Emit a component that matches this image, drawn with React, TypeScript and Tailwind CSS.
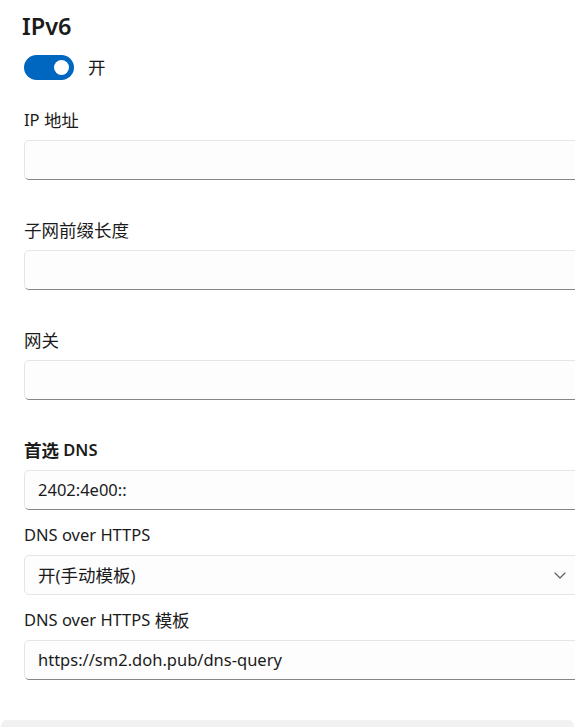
import React from 'react';

const font = { fontFamily: '"Noto Sans", "Noto Sans CJK SC", sans-serif' };

// CJK runs are set a little larger so they match the reference's width
const Cjk = ({ children }: { children: React.ReactNode }) => <span className="text-[17.5px]">{children}</span>;

const TextBox = ({ value }: { value?: string }) => (
    <div className="h-10 w-[560px] rounded-[5px] border border-[#e5e5e5] border-b-[#868686] bg-[#fdfdfd] flex items-center px-[13px] text-[16.5px] text-[#1b1b1b]">
        {value}
    </div>
);

const Label = ({ children, bold }: { children: React.ReactNode; bold?: boolean }) => (
    <div className={`h-5 flex items-center whitespace-pre text-[16.5px] text-[#1b1b1b] ${bold ? 'font-semibold' : ''}`}>
        {children}
    </div>
);

const App = () => {
    return (
        <div className="w-[575px] h-[727px] bg-white overflow-hidden flex flex-col" style={font}>
            <div className="px-6 flex flex-col">
                {/* Title */}
                <div className="mt-[9px] h-9 flex items-center -ml-[2px] text-[23.5px] font-semibold text-[#1b1b1b]">IPv6</div>

                {/* Toggle */}
                <div className="mt-[10px] flex items-center h-[25px]">
                    <div className="relative w-[50px] h-[25px] rounded-full bg-[#0067c0]">
                        <div className="absolute right-[5px] top-[5px] w-[15px] h-[15px] rounded-full bg-white" />
                    </div>
                    <span className="ml-[14px] text-[17.5px] text-[#1b1b1b]">开</span>
                </div>

                <div className="mt-[30px]"><Label>IP <Cjk>地址</Cjk></Label></div>
                <div className="mt-[10px]"><TextBox /></div>

                <div className="mt-10"><Label><Cjk>子网前缀长度</Cjk></Label></div>
                <div className="mt-[10px]"><TextBox /></div>

                <div className="mt-10"><Label><Cjk>网关</Cjk></Label></div>
                <div className="mt-[10px]"><TextBox /></div>

                <div className="mt-10"><Label bold><Cjk>首选</Cjk> DNS</Label></div>
                <div className="mt-[10px]"><TextBox value="2402:4e00::" /></div>

                <div className="mt-[15px]"><Label>DNS over HTTPS</Label></div>
                <div className="mt-[10px]">
                    <div className="h-[40px] w-[560px] rounded-[5px] border border-[#e5e5e5] bg-[#fdfdfd] flex items-center px-[13px] text-[16.5px] text-[#1b1b1b]">
                        <span className="flex-1"><Cjk>开</Cjk>(<Cjk>手动模板</Cjk>)</span>
                        <svg width="12" height="7" viewBox="0 0 12 7" className="mr-[4px]" fill="none">
                            <path d="M1 1l5 5 5-5" stroke="#5f5f5f" strokeWidth="1.2" strokeLinecap="round" strokeLinejoin="round" />
                        </svg>
                    </div>
                </div>

                <div className="mt-[15px]"><Label>DNS over HTTPS <Cjk>模板</Cjk></Label></div>
                <div className="mt-[10px]"><TextBox value="https://sm2.doh.pub/dns-query" /></div>
            </div>

            {/* next card peeking in */}
            <div className="mt-10 mx-[1px] h-[40px] rounded-t-[6px] bg-[#f1f1f1]" />
        </div>
    );
};

export default App;
